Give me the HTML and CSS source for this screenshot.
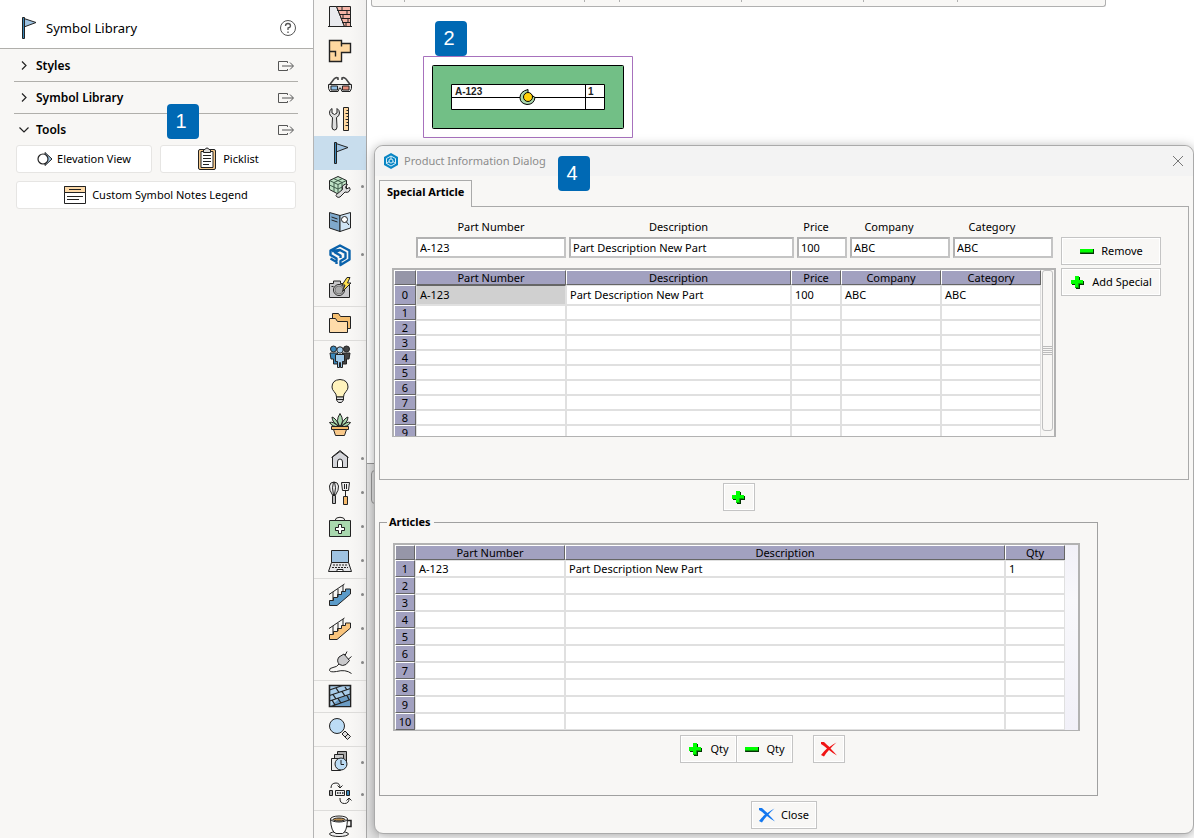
FILE: index.html
```html
<!DOCTYPE html>
<html lang="en">
<head>
  <meta charset="UTF-8" />
  <meta name="viewport" content="width=device-width, initial-scale=1.0"/>
  <title>Symbol Library</title>
  <link rel="stylesheet" href="styles.css">
</head>
<body>
  <!-- shared icons -->
  <svg class="sprite" aria-hidden="true">
    <symbol id="flag" viewBox="0 0 24 24">
      <path d="M8 2.500L20 6.500 8 11z" fill="#9fc3e2" stroke="#222"/>
      <path d="M6.500 1.500h2v21h-2z" fill="#3a86b8" stroke="#222"/>
    </symbol>
    <symbol id="export" viewBox="0 0 18 12">
      <path d="M10.500 3V1.500h-9v9h9V9M5 6h11M13 2.500L16.500 6 13 9.500" fill="none" stroke="#555"/>
    </symbol>
    <symbol id="plus" viewBox="0 0 16 16">
      <path d="M6 3h4v4h4v4h-4v4H6v-4H2V7h4z" fill="#033503"/>
      <path d="M5 2h4v4h4v4H9v4H5v-4H1V6h4z" fill="#0f0"/>
      <path d="M5.500 13.500h3v-4h4" fill="none" stroke="#0a9a0a"/>
    </symbol>
    <symbol id="minus" viewBox="0 0 16 16">
      <path d="M2 6h13v5H1z" fill="#033503"/>
      <path d="M1 6h13v4H1z" fill="#0f0"/>
      <path d="M1 9.500h13" stroke="#0a9a0a"/>
    </symbol>
    <symbol id="cross" viewBox="0 0 16 16">
      <path d="M0 1l3 0q3 3 5.500 5Q12 3 15.500 1.500 12 4.500 9.500 7.500q3 3 6.500 7-4.500-2.500-8-5.500Q5 12 3 15.500L0 14q3-4 6-6.500Q3 4.500 0 3z" fill="currentColor"/>
    </symbol>
    <symbol id="stairs" viewBox="0 0 24 24">
      <path d="M1.500 22.500v-5h4v-3h4v-3h4v-3h4V6h5v5L9 22.500z" fill="currentColor" stroke="#222"/>
      <path d="M1 11.500L16.500 1M5 9v8M10 6v8M15 2v7" fill="none" stroke="#222"/>
    </symbol>
  </svg>

  <aside class="palette">
    <header class="palette-header">
      <svg class="icon"><use href="#flag"/></svg>
      <h1>Symbol Library</h1>
      <button class="plain" aria-label="Help">
        <svg width="18" height="18" viewBox="0 0 18 18" fill="none" stroke="#555">
          <circle cx="9" cy="9" r="7.500"/>
          <path d="M6.500 7q0-2.500 2.500-2.500T11.500 7Q11.500 8.500 9 9v2M9 12.500v1.500" stroke-width="1.300"/>
        </svg>
      </button>
    </header>

    <div class="sections">
      <div class="section">
        <button class="plain section-title">
          <svg class="arrow" viewBox="0 0 10 10"><path d="M3 0.500L7 4.500 3 8.500"/></svg>Styles
        </button>
        <button class="plain" aria-label="Open styles"><svg class="export"><use href="#export"/></svg></button>
      </div>
      <div class="section">
        <button class="plain section-title">
          <svg class="arrow" viewBox="0 0 10 10"><path d="M3 0.500L7 4.500 3 8.500"/></svg>Symbol Library
        </button>
        <button class="plain" aria-label="Open symbol library"><svg class="export"><use href="#export"/></svg></button>
      </div>
      <div class="section">
        <button class="plain section-title">
          <svg class="arrow" viewBox="0 0 10 10"><path d="M0.500 2.500L5 7l4.500-4.500"/></svg>Tools
        </button>
        <button class="plain" aria-label="Open tools"><svg class="export"><use href="#export"/></svg></button>
      </div>
    </div>

    <div class="tool-buttons">
      <button>
        <svg width="16" height="16" viewBox="0 0 16 16" stroke="#222">
          <path d="M8 1.500L15 8l-7 6.500z" fill="#9fc3e2"/>
          <circle cx="6" cy="8" r="5" fill="#fff" stroke-width="1.200"/>
        </svg>
        Elevation View
      </button>
      <button class="picklist">
        <svg width="20" height="24" viewBox="0 0 20 24" stroke="#222">
          <rect x="1.500" y="2.500" width="17" height="20" rx="1.500" fill="#f6ca8d"/>
          <path d="M4 4.500h12v16H4z" fill="#fff"/>
          <path d="M6.500 5.500v-3H8Q8.500 1 10 1t2 1.500h1.500v3z" fill="#ddd"/>
          <path d="M6 8.500h8M6 11.500h8M6 14.500h8M6 17.500h6"/>
        </svg>
        Picklist
      </button>
      <button class="wide">
        <svg width="22" height="18" viewBox="0 0 22 18" stroke="#222">
          <path d="M.5.5h21v17H.5z" fill="#fff"/>
          <path d="M.5.5h21v6H.5z" fill="#fcd9a8"/>
          <path d="M5 3.500h12M3 10.500h16M3 13.500h12"/>
        </svg>
        Custom Symbol Notes Legend
      </button>
    </div>
    <span class="badge badge-1">1</span>
  </aside>

  <nav class="toolbar" aria-label="Tools">
    <div class="group">
      <button aria-label="Walls"><svg class="icon" viewBox="0 0 24 24">
        <path d="M1.500 1.500h7l8 20h-15z" fill="#e9eaee"/>
        <path d="M8.500 1.500h14v20h-6z" fill="#f4b5a7"/>
        <path d="M9 5.500h13.500M11 9.500h11.500M13 13.500h9.500M14 17.500h8.500M14 1.500v4M19 5.500v4M15 9.500v4M20 13.500v4M18 17.500v4M0 21.500h24"/>
      </svg></button>
      <button aria-label="Rooms"><svg class="icon" viewBox="0 0 24 24">
        <path d="M1.500 1.500h12v3h9v9h-9v9h-12z" fill="#ffd8a0" stroke-width="1.400"/>
        <path d="M1.500 12.500h6v5M13.500 4.500v3" fill="none" stroke-width="1.400"/>
      </svg></button>
      <button aria-label="3D view"><svg class="icon" viewBox="0 0 24 24">
        <path d="M1.500 12L6 6q2-2 4-1v2M22.500 12L18 6q-2-2-4-1v2" fill="none" stroke="#444" stroke-width="1.600"/>
        <path d="M.5 11.500h23v4l-1.500 3h-8L12.500 15h-1L10 18.500H2L.5 15.500z" fill="#ddd"/>
        <path d="M3 13h6.500v4H3z" fill="#8fbfe6"/><path d="M14.500 13H21v4h-6.500z" fill="#e98d7b"/>
      </svg></button>
      <button aria-label="Settings"><svg class="icon" viewBox="0 0 24 24">
        <path d="M4 1.500Q1 3 1.500 6.500 2 9 4.500 10.500L4 20q0 3 2.500 3T9 20l-.5-9.500Q11.500 9 11.500 6T9 1.500V6L6.500 7.500 4 6z" fill="#ddd"/>
        <path d="M15.500.5h5v23h-5z" fill="#ffd8a0"/>
        <path d="M18.500 3.500h2M17.500 6.500h3M18.500 9.500h2M17.500 12.500h3M18.500 15.500h2M17.500 18.500h3"/>
      </svg></button>
      <button class="active" aria-label="Symbols"><svg class="icon"><use href="#flag"/></svg></button>
      <button class="more" aria-label="Model tools"><svg class="icon" viewBox="0 0 24 24">
        <path d="M1.500 5.500L10 1.500l8.500 4v9L10 19l-8.500-4.500z" fill="#bfe3c6"/>
        <path d="M1.500 5.500L10 9.500l8.500-4M10 9.500V19M5.500 3.500l8.500 4V17M14.500 3.500L6 7.500V17M1.500 10l8.500 4 8.500-4" fill="none" stroke="#3d5a48"/>
        <path d="M8.500 19.500l6-5q-1-3 1-4.500 2-1.500 4-.5L17.500 12l1 2 3-1.500q1.500 2-.5 4-1.500 1.500-4 .5l-5 5q-2 1-3.500-.5-1-1 0-2z" fill="#ddd"/>
      </svg></button>
      <button aria-label="Catalog"><svg class="icon" viewBox="0 0 24 24">
        <path d="M1.500 3.500L12 6.500v16L1.500 19z" fill="#7fa9cc"/>
        <path d="M12 6.500l10.500-3V19L12 22.500z" fill="#cfe4f5"/>
        <path d="M3.500 8l6 2M3.500 11l6 2" fill="none"/>
        <circle cx="16.500" cy="10.500" r="3" fill="#fff"/><path d="M18.500 13l2.500 3"/>
      </svg></button>
      <button class="more" aria-label="SketchUp"><svg class="icon logo" viewBox="0 0 24 24">
        <path d="M2.500 9V7.500L12 2.500l9.500 5v9L12.500 22v-4l5-3V10L12 7 7 9.500l5.500 3v2.500M2.500 9v3l6 3.500v2.500M2.500 15.500L8.500 19v2M4 8l8-1"/>
      </svg></button>
      <button aria-label="Render"><svg class="icon" viewBox="0 0 24 24">
        <path d="M1.500 6.500h4V4h7v2.500h9v14h-20z" fill="#c9c9cb"/>
        <circle cx="11" cy="13" r="5.500" fill="#ddd"/><circle cx="11" cy="13" r="4" fill="#aaa" stroke="#777"/>
        <path d="M3.500 9.500h2"/>
        <path d="M19 .5L14 8h3l-2.500 6.500L23 6h-3.500L22 .5z" fill="#ffe04d"/>
      </svg></button>
    </div>
    <div class="group">
      <button aria-label="Projects"><svg class="icon" viewBox="0 0 24 24">
        <path d="M4.500 2.500h6l2 3h10v12h-18z" fill="#f5bf70"/>
        <path d="M1.500 7.500h6l2 3h10v11h-18z" fill="#ffdcaa"/>
      </svg></button>
    </div>
    <div class="group">
      <button aria-label="People"><svg class="icon" viewBox="0 0 24 24">
        <circle cx="5.500" cy="4" r="3" fill="#3a86b8"/><path d="M2 8h7.500v11h-4v-5H3z" fill="#3a86b8"/>
        <circle cx="18.500" cy="4" r="3" fill="#444"/><path d="M14.500 8H22l-1 6h-2.500v5h-4z" fill="#444"/>
        <circle cx="12" cy="5" r="3.200" fill="#9fc9e8"/><path d="M7.500 9.500h9v7h-2v6h-2v-5h-1v5h-2v-6h-2z" fill="#9fc9e8"/>
      </svg></button>
      <button aria-label="Lighting"><svg class="icon" viewBox="0 0 24 24">
        <path d="M8.500 18q0-3-2.500-5.500Q4 10.500 4 8q0-7 8-7.500Q20 1 20 8q0 2.500-2 4.500-2.500 2.500-2.500 5.500z" fill="#fff3bd"/>
        <path d="M8.500 18h7v3l-2 2.500h-3l-2-2.500z" fill="#ddd"/><path d="M8.500 20.500h7"/>
      </svg></button>
      <button aria-label="Plants"><svg class="icon" viewBox="0 0 24 24">
        <path d="M12 14Q5 8 1.500 9.500 4 14 12 14zM12 14q7-6 10.500-4.500Q20 14 12 14zM12 14Q8 5 4 4q0 6 8 10zM12 14q4-9 8-10 0 6-8 10zM12 14Q7 8 12 .5 17 8 12 14z" fill="#a9d8ae"/>
        <path d="M3.500 13.500h17v3h-17z" fill="#f5b96a"/><path d="M5.500 16.500h13l-2 6h-9z" fill="#f9c98a"/>
      </svg></button>
      <button class="more" aria-label="Buildings"><svg class="icon" viewBox="0 0 24 24">
        <path d="M4.500 10v10.500h15V10L12 4.500z" fill="#d5d6da"/>
        <path d="M9.500 20.500V15q0-3 2.500-3t2.500 3v5.500z" fill="#fff"/><path d="M3.500 10.500L12 3.500l8.500 7" fill="none"/>
      </svg></button>
      <button class="more" aria-label="Kitchen"><svg class="icon" viewBox="0 0 24 24">
        <path d="M4.500 14Q1 9 1.500 5 2 1 6 1t4.500 4q.5 4-3 9z" fill="#eee"/><path d="M5.500 14Q3.500 6 5.500 1M6.500 14Q8.500 6 6.500 1" fill="none"/>
        <path d="M4.500 14.500h3v8h-3z" fill="#bbb"/>
        <path d="M13.500 1.500h8l-1 8h-6z" fill="#eee"/><path d="M16.500 3v5M18.500 3v5M17.500 9.500v6"/>
        <path d="M15.500 15.500h4v8h-4z" fill="#f5b96a"/>
      </svg></button>
      <button class="more" aria-label="Medical"><svg class="icon" viewBox="0 0 24 24">
        <path d="M7 5.500L8.500 3q3.500-1.500 7 0L17 5.500" fill="none"/>
        <path d="M1.500 5.500h21v16h-21z" fill="#a9d8ae"/>
        <path d="M10.500 9.500h3v3h3v3h-3v3h-3v-3h-3v-3h3z" fill="#fff"/>
      </svg></button>
      <button class="more" aria-label="Office"><svg class="icon" viewBox="0 0 24 24">
        <path d="M3.500 1.500h17v12h-17z" fill="#9fc3e2"/>
        <path d="M3.500 13.500h17l3 9H.5z" fill="#e5e5e7"/>
        <path d="M5 16h14M4 18.500h16" stroke-dasharray="2 1"/><path d="M9 20.500h6v2H9z" fill="#fff"/>
      </svg></button>
    </div>
    <div class="group">
      <button class="more" aria-label="Stairs"><svg class="icon blue"><use href="#stairs"/></svg></button>
      <button class="more" aria-label="Stair editor"><svg class="icon orange"><use href="#stairs"/></svg></button>
      <button class="more" aria-label="Electrical"><svg class="icon" viewBox="0 0 24 24">
        <path d="M11 6l5-3 5.500 6.500-3.500 4q-3.500 2-6.500 0-3.500-3.500-.5-7.500z" fill="#c9c9cb"/>
        <path d="M17 4.500l2-4M20 8.500l3.500-3M11 13q-2 3-6 3.500-4 .5-3.500 3 1 2 7 1 9-2.500 15 2" fill="none"/>
      </svg></button>
    </div>
    <div class="group compact">
      <button aria-label="Hatch"><svg class="icon" viewBox="0 0 24 24">
        <path d="M1.500 1.500h21v21h-21z" fill="#a9cdea" stroke-width="1.600"/>
        <path d="M12 14l10-3v11H3z" fill="#6b9cc4" stroke="none"/>
        <path d="M1.500 6l13-4.500M1.500 11.500l21-7M1.500 17l21-7M3 22.500l19.500-7M8 4l3 4.500M17 3l2 3M5 10.500L8 15M14 7.500l3 4.500M10 14.500l3 4.500M19 11.500l2 4M4 16l3 5" fill="none" stroke-width="1.300"/>
      </svg></button>
    </div>
    <div class="group">
      <button aria-label="Search"><svg class="icon" viewBox="0 0 24 24">
        <circle cx="9" cy="9" r="7.500" fill="#bcdcf5"/>
        <path d="M14 17l3-3 5.500 5.500-3 3z" fill="#ddd"/><path d="M17 20l3-3" />
      </svg></button>
    </div>
    <div class="group compact">
      <button class="more" aria-label="History"><svg class="icon" viewBox="0 0 24 24">
        <path d="M9.500 1.500h9v14h-9z" fill="#aaa"/><path d="M6.500 4.500h9v14h-9z" fill="#ccc"/><path d="M3.500 8.500h9v12h-9z" fill="#eee"/>
        <circle cx="13" cy="14" r="6" fill="#bcdcf5"/><path d="M13 10v4.500h3" fill="none"/>
      </svg></button>
      <button class="more" aria-label="Replace"><svg class="icon" viewBox="0 0 24 24">
        <path d="M1.500 8.500h3v5h-3z" fill="#aaa"/><path d="M7.500 8.500h9v5h-9z" fill="#eee"/><path d="M18.500 8.500h3v5h-3z" fill="#3a86b8"/>
        <path d="M9 11h1.500M11.500 11H13M14 11h1.500" stroke-width="1.500"/>
        <path d="M3 6q0-5 5-5 4 0 4 5M9.500 3.500L12 6l2.500-2.500M12 16v1q0 4.500 4.500 4.500T21 16.500M18.500 18.500L21 16l2.500 2.500" fill="none"/>
      </svg></button>
    </div>
    <div class="group">
      <button aria-label="Coffee"><svg class="icon" viewBox="0 0 24 24">
        <path d="M18 5.500h5v6h-5" fill="none" stroke-width="1.500"/>
        <ellipse cx="11" cy="19" rx="9.500" ry="2.500" fill="#eee"/>
        <path d="M2.500 4Q3 17 8 18.500h6.500Q19 17 19.500 4z" fill="#fff"/>
        <ellipse cx="11" cy="4" rx="8.500" ry="3" fill="#fff"/><ellipse cx="11" cy="4.500" rx="6" ry="1.500" fill="#b98b4b"/>
      </svg></button>
    </div>
  </nav>

  <main class="workspace">
    <div class="ruler"><i></i><i></i><i></i><i></i><i></i><i></i></div>
    <div class="side-tab"></div>

    <svg class="drawing" width="210" height="82" viewBox="0 0 210 82">
      <path d="M.5.5h209v81H.5z" fill="#fff" stroke="#a771bd"/>
      <rect x="9.500" y="9.500" width="191" height="63" rx="1" fill="#72bf86" stroke="#000"/>
      <path d="M28.500 28.500h153v25h-153z" fill="#fff" stroke="#000"/>
      <path d="M28 41.500h153M162.500 28v25" stroke="#000"/>
      <text x="32" y="39">A-123</text>
      <text x="165" y="39">1</text>
      <path d="M105 33.500v3l7 5q-1 7-8 7-7-1-7-7t8-8z" fill="#a9d8ae" stroke="#000"/>
      <circle cx="105" cy="41" r="4.500" fill="#ffd20a" stroke="#000"/>
    </svg>
    <span class="badge badge-2">2</span>

    <section class="dialog" role="dialog" aria-labelledby="dialog-title">
      <header class="titlebar">
        <svg width="16" height="16" viewBox="0 0 16 16">
          <path d="M8 0l7 4v8l-7 4-7-4V4z" fill="#0a86c4"/>
          <path d="M8 3l4.500 2.500v5L8 13l-4.500-2.500v-5zM8 3v4l-4.500 3.500M8 7l4.500 3.500" fill="none" stroke="#d5edf8"/>
          <circle cx="8" cy="8" r="2" fill="#0a86c4" stroke="#d5edf8"/>
        </svg>
        <h2 id="dialog-title">Product Information Dialog</h2>
        <button class="plain" aria-label="Close dialog">
          <svg width="12" height="12" viewBox="0 0 12 12"><path d="M1 1l10 10M11 1L1 11" stroke="#777"/></svg>
        </button>
      </header>
      <span class="badge badge-4">4</span>

      <div class="dialog-body">
        <button class="tab" role="tab" aria-selected="true">Special Article</button>
        <div class="panel" role="tabpanel">
          <div class="panel-main">
            <form class="fields">
              <label>Part Number<input type="text" value="A-123"></label>
              <label>Description<input type="text" value="Part Description New Part"></label>
              <label>Price<input type="text" value="100"></label>
              <label>Company<input type="text" value="ABC"></label>
              <label>Category<input type="text" value="ABC"></label>
            </form>
            <div class="grid-box stock">
              <table>
                <colgroup><col class="w-index"><col class="w-part"><col><col class="w-price"><col class="w-mid"><col class="w-mid"></colgroup>
                <thead>
                  <tr><th></th><th>Part Number</th><th>Description</th><th>Price</th><th>Company</th><th>Category</th></tr>
                </thead>
                <tbody id="stock-rows">
                  <tr class="first"><th>0</th><td class="selected">A-123</td><td>Part Description New Part</td><td>100</td><td>ABC</td><td>ABC</td></tr>
                </tbody>
              </table>
              <div class="scrollbar"><div class="thumb"></div></div>
            </div>
          </div>
          <div class="panel-actions">
            <button class="btn"><svg><use href="#minus"/></svg>Remove</button>
            <button class="btn"><svg><use href="#plus"/></svg>Add Special</button>
          </div>
        </div>

        <div class="articles">
          <button class="btn square" aria-label="Add article"><svg><use href="#plus"/></svg></button>
          <fieldset>
            <legend>Articles</legend>
            <div class="grid-box">
              <table>
                <colgroup><col class="w-index"><col class="w-part"><col><col class="w-qty"></colgroup>
                <thead>
                  <tr><th></th><th>Part Number</th><th>Description</th><th>Qty</th></tr>
                </thead>
                <tbody id="article-rows">
                  <tr><th>1</th><td>A-123</td><td>Part Description New Part</td><td>1</td></tr>
                </tbody>
              </table>
              <div class="gutter"></div>
            </div>
            <div class="qty-actions">
              <div class="qty-pair">
                <button class="btn"><svg><use href="#plus"/></svg>Qty</button>
                <button class="btn"><svg><use href="#minus"/></svg>Qty</button>
              </div>
              <button class="btn square red" aria-label="Delete article"><svg><use href="#cross"/></svg></button>
            </div>
          </fieldset>
        </div>
        <button class="btn close"><svg><use href="#cross"/></svg>Close</button>
      </div>
    </section>
  </main>

  <script>
    // fill the grids with empty numbered rows
    function addRows(id, from, to, cols) {
      const body = document.getElementById(id);
      for (let i = from; i <= to; i++) {
        body.insertAdjacentHTML("beforeend", `<tr><th>${i}</th>${"<td></td>".repeat(cols)}</tr>`);
      }
    }

    addRows("stock-rows", 1, 9, 5);
    addRows("article-rows", 2, 10, 3);
  </script>
</body>
</html>
```
FILE: styles.css
```css
* {
  box-sizing: border-box;
}

body {
  margin: 0;
  height: 100vh;
  display: flex;
  overflow: hidden;
  font: 11px/16px "Noto Sans", "Open Sans", sans-serif;
  color: #000;
  background: #fff;
}

h1, h2 {
  margin: 0;
  font-weight: 400;
}

button, input {
  font: inherit;
  color: inherit;
}

svg {
  display: block;
  flex: none;
}

.sprite {
  position: absolute;
  width: 0;
  height: 0;
}

.icon {
  width: 24px;
  height: 24px;
  stroke: #222;
}

.logo {
  fill: none;
  stroke: #0a62ab;
  stroke-width: 2.4;
  stroke-linejoin: round;
}

.plain {
  display: flex;
  padding: 0;
  border: 0;
  background: none;
}

.badge {
  position: absolute;
  width: 32px;
  height: 35px;
  padding-right: 4px;
  border-radius: 4px;
  background: #0069b4;
  color: #fff;
  font: 20px/35px "Liberation Sans", Arial, sans-serif;
  text-align: center;
}

.badge-1 { left: 167px; top: 104px; }
.badge-2 { left: 68px; top: 21px; }
.badge-4 { left: 183px; top: 10px; }

/* left palette */
.palette {
  position: relative;
  flex: 0 0 314px;
  background: #f8f7f5;
  border-right: 1px solid #b4b4b4;
}

.palette-header {
  display: flex;
  align-items: center;
  height: 49px;
  padding: 8px 16px 0;
  background: #fff;
  border-bottom: 1px solid #b0afab;
}

.palette-header h1 {
  flex: 1;
  margin-left: 6px;
  font-size: 13px;
}

.sections {
  padding: 1px 15px 0 14px;
}

.section {
  display: flex;
  align-items: center;
  justify-content: space-between;
  height: 32px;
  padding: 0 3px 0 5px;
  border-bottom: 1px solid #b0afab;
}

.section:last-child {
  height: 31px;
  border-bottom: 0;
}

.section-title {
  align-items: center;
  gap: 7px;
  font-size: 12px;
  font-weight: 600;
}

.arrow {
  width: 10px;
  height: 10px;
  fill: none;
  stroke: #222;
  stroke-width: 1.2;
}

.export {
  width: 18px;
  height: 12px;
}

.tool-buttons {
  display: grid;
  grid-template-columns: 1fr 1fr;
  gap: 8px;
  padding: 0 17px 0 16px;
}

.tool-buttons button {
  display: flex;
  align-items: center;
  justify-content: center;
  gap: 4px;
  height: 28px;
  padding: 0;
  border: 1px solid #e6e5e3;
  border-radius: 3px;
  background: #fff;
}

.tool-buttons .picklist {
  gap: 6px;
}

.tool-buttons .wide {
  grid-column: span 2;
  gap: 6px;
}

/* vertical tool bar */
.toolbar {
  flex: 0 0 53px;
  background: linear-gradient(to right, #f8f7f5 70%, #f1f0ef);
  border-right: 1px solid #a8a8a8;
}

.toolbar button {
  position: relative;
  display: flex;
  align-items: center;
  justify-content: center;
  width: 100%;
  height: 34px;
  padding: 0;
  border: 0;
  background: none;
}

.toolbar .compact button {
  height: 32px;
}

.toolbar .active {
  background: #c8dded;
}

.toolbar .more::after {
  content: "";
  position: absolute;
  right: 2px;
  top: 15px;
  width: 3px;
  height: 3px;
  border-radius: 50%;
  background: #888;
}

.group + .group {
  box-shadow: inset 0 1px #dddcda;
}

.blue { color: #5b9bc9; }
.orange { color: #f9c47c; }

/* drawing area */
.workspace {
  position: relative;
  flex: 1;
  min-width: 0;
}

.ruler {
  display: flex;
  height: 7px;
  margin: 0 88px 0 4px;
  border: 1px solid #b0b0b0;
  border-top: 0;
  border-radius: 0 0 3px 3px;
  background: #f8f7f5;
}

.ruler i {
  width: 122px;
  height: 2px;
  border-right: 1px solid #b0b0b0;
}

.ruler i:first-child { width: 33px; }
.ruler i:nth-child(2) { width: 180px; }
.ruler i:nth-child(3) { width: 35px; }
.ruler i:last-child { width: 94px; }

.side-tab {
  position: absolute;
  left: 0;
  top: 463px;
  width: 12px;
  height: 375px;
  border-top: 1px solid #999;
  background: #e4e4e4;
}

.side-tab::after {
  content: "";
  display: block;
  height: 32px;
  margin: 6px 0 0 4px;
  border: 1px solid #999;
  border-radius: 4px;
}

.drawing {
  position: absolute;
  left: 56px;
  top: 56px;
}

.drawing text {
  font: bold 10px "Liberation Sans", Arial, sans-serif;
  fill: #222;
}

/* product dialog */
.dialog {
  position: absolute;
  left: 7px;
  right: 0;
  top: 145px;
  border: 1px solid #aaa;
  border-radius: 9px;
  background: #f8f7f5;
  box-shadow: 0 2px 12px rgba(0, 0, 0, 0.35);
}

.titlebar {
  display: flex;
  align-items: center;
  height: 30px;
  padding: 0 9px 0 8px;
  border-radius: 9px 9px 0 0;
  background: #f3f3f3;
}

.titlebar h2 {
  flex: 1;
  margin-left: 5px;
  font-size: 11px;
  color: #8c8c8c;
}

.dialog-body {
  padding: 4px;
}

.tab {
  position: relative;
  display: block;
  height: 27px;
  margin-bottom: -1px;
  padding: 0 7px 4px;
  border: 1px solid #aaa;
  border-bottom: 0;
  background: #f8f7f5;
  font-weight: 700;
}

.panel {
  display: flex;
  gap: 5px;
  padding: 12px 27px 42px 12px;
  border: 1px solid #aaa;
}

.panel-main {
  flex: 1;
  min-width: 0;
}

.fields {
  display: grid;
  grid-template-columns: 150px 1fr 50px 100px 100px;
  gap: 3px;
  margin-bottom: 10px;
  padding: 0 3px 0 24px;
}

.fields label {
  text-align: center;
}

.fields label:nth-child(2) {
  text-indent: -6px;
}

.fields label:nth-child(3) {
  text-indent: -12px;
}

.fields label:nth-child(n+4) {
  text-indent: -22px;
}

.fields input {
  display: block;
  width: 100%;
  height: 21px;
  margin-top: 2px;
  padding: 0 2px;
  border: 2px solid #b2b2b2;
  border-right-color: #c4c4c4;
  border-bottom-color: #c4c4c4;
  background: #fff;
  text-indent: 0;
}

.grid-box {
  display: flex;
  border: 2px solid #b2b2b2;
  border-bottom-width: 1px;
  overflow: hidden;
}

.stock {
  height: 169px;
}

table {
  flex: 1;
  min-width: 0;
  align-self: flex-start;
  table-layout: fixed;
  border-collapse: separate;
  border-spacing: 0;
  line-height: 13px;
}

.w-index { width: 20px; }
.w-part { width: 150px; }
.w-price { width: 50px; }
.w-mid { width: 100px; }
.w-qty { width: 60px; }

.stock .w-index { width: 22px; }

th, td {
  height: 17px;
  padding: 0;
  border: 1px solid;
  white-space: nowrap;
}

th {
  border-color: #fff #666 #666 #fff;
  background: #a2a1c0;
  font-weight: 400;
}

thead th {
  height: 15px;
}

thead th:first-child {
  background: #9696a8;
}

td {
  padding-left: 3px;
  border-color: #e0e0e0;
  background: #fff;
}

.stock tbody th, .stock tbody td {
  height: 15px;
}

.stock .first th, .stock .first td {
  height: 20px;
  padding-bottom: 2px;
}

td.selected {
  border-top-color: #666;
  background: #d0d0d0;
}

.scrollbar {
  width: 13px;
  height: 162px;
}

.thumb {
  height: 161px;
  margin: 0 1px;
  border: 1px solid #c0c0c0;
  border-radius: 3px;
  background: repeating-linear-gradient(#bbb 0 1px, #f8f7f5 1px 2px) center / 9px 9px no-repeat;
}

.gutter {
  width: 13px;
  background: linear-gradient(#f1f0f8, #f8f8fb 30%, #f1f0f8);
}

.panel-actions {
  display: flex;
  flex-direction: column;
  gap: 3px;
  width: 100px;
  padding-top: 18px;
}

.btn {
  display: flex;
  align-items: center;
  justify-content: center;
  gap: 6px;
  height: 28px;
  padding: 0 7px;
  border: 1px solid #c4c4c4;
  background: #f8f7f5;
  box-shadow: inset 0 0 0 1px #fff;
}

.btn svg {
  width: 16px;
  height: 16px;
}

.panel-actions .btn {
  padding: 0 4px;
}

.square {
  width: 32px;
}

.articles {
  display: flex;
  flex-direction: column;
  align-items: center;
  margin: 3px 91px 0 0;
}

fieldset {
  width: 100%;
  min-width: 0;
  margin: 3px 0 0;
  padding: 13px 17px 32px 13px;
  border: 1px solid #a0a0a0;
}

legend {
  margin-left: -6px;
  padding: 0 3px 0 2px;
  font-weight: 700;
}

.qty-actions {
  display: grid;
  grid-template-columns: 1fr auto 1fr;
  gap: 20px;
  margin-top: 4px;
}

.qty-pair {
  display: flex;
  grid-column: 2;
}

.qty-pair .btn {
  width: 57px;
}

.qty-pair .btn + .btn {
  margin-left: -1px;
}

.red {
  color: #f01414;
}

.close {
  margin: 5px auto 0;
}

.close svg {
  color: #1478f0;
}
```
